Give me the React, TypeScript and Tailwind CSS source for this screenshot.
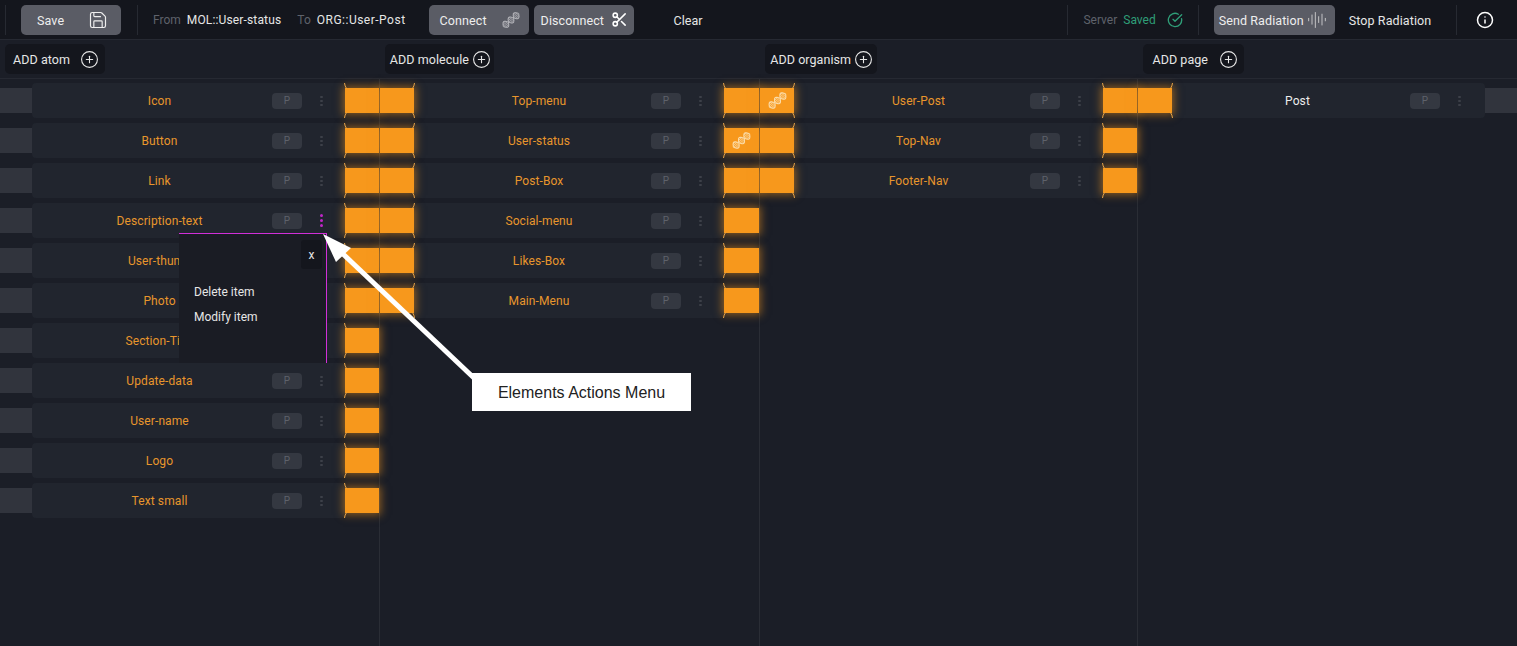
import { AudioLines, CircleCheckBig, CirclePlus, Info, Save, Scissors } from 'lucide-react';

interface Column {
  label: string;
  addClass: string;
  headClass: string;
  colClass: string;
  leftClass: string;
  cardClass: string;
  rightClass: string;
  items: string[];
  leftKind: 'gray' | 'orange';
  rightKind: 'gray' | 'orange';
}

const COLUMNS: Column[] = [
  {
    label: 'atom', addClass: 'w-[100px] gap-[10px] pr-[6px]', headClass: 'w-[380px]', colClass: 'w-[380px] border-r', leftClass: 'w-[32px]', cardClass: 'w-[313px] pl-[15px] pr-[22px]', rightClass: 'w-[34px]',
    leftKind: 'gray', rightKind: 'orange',
    items: ['Icon', 'Button', 'Link', 'Description-text', 'User-thumb', 'Photo', 'Section-Title', 'Update-data', 'User-name', 'Logo', 'Text small'],
  },
  {
    label: 'molecule', addClass: 'w-[109px] gap-[3px] pr-[3px]', headClass: 'w-[380px]', colClass: 'w-[380px] border-r', leftClass: 'w-[34px]', cardClass: 'w-[310px] pl-[13px] pr-[22px]', rightClass: 'w-[35px]',
    leftKind: 'orange', rightKind: 'orange',
    items: ['Top-menu', 'User-status', 'Post-Box', 'Social-menu', 'Likes-Box', 'Main-Menu'],
  },
  {
    label: 'organism', addClass: 'w-[112px] gap-[3px] pr-[4px]', headClass: 'w-[378px]', colClass: 'w-[378px] border-r', leftClass: 'w-[34px]', cardClass: 'w-[309px] pl-[13px] pr-[22px]', rightClass: 'w-[34px]',
    leftKind: 'orange', rightKind: 'orange',
    items: ['User-Post', 'Top-Nav', 'Footer-Nav'],
  },
  {
    label: 'page', addClass: 'w-[101px] gap-[11px] pr-[6px]', headClass: 'flex-1', colClass: 'flex-1', leftClass: 'w-[34px]', cardClass: 'w-[313px] pl-[13px] pr-[24px]', rightClass: 'flex-1',
    leftKind: 'orange', rightKind: 'gray',
    items: ['Post'],
  },
];

const wave = (sign: number) => {
  const points: string[] = [];
  for (let x = 0; x <= 24; x += 1) {
    points.push(`${x},${(12 + sign * 4.2 * Math.sin((Math.PI * x) / 8)).toFixed(2)}`);
  }
  return points.join(' ');
};

const RUNGS = [1.5, 3, 4.5, 6, 9.5, 11, 12.5, 14, 17.5, 19, 20.5, 22];

// diagonal double helix, hatched with small rungs
const Dna = ({ size, className }: { size: number; className: string }) => (
  <svg width={size} height={size} viewBox="0 0 24 24" fill="none" stroke="currentColor" className={className}>
    <g transform="rotate(-40 12 12)">
      <polyline points={wave(1)} strokeWidth="1.2" />
      <polyline points={wave(-1)} strokeWidth="1.2" />
      {RUNGS.map((x) => {
        const amp = Math.abs(Math.sin((Math.PI * x) / 8)) * 4.2;
        return <line key={x} x1={x} x2={x} y1={12 - amp} y2={12 + amp} strokeWidth="0.8" />;
      })}
    </g>
  </svg>
);

// small curved tips where a port meets its card
const Flare = ({ side }: { side: 'left' | 'right' }) => (
  <svg width="4" height="35" viewBox="0 0 4 35" fill="none" className={side === 'right' ? 'absolute left-[-1px] top-0' : 'absolute right-[-1px] top-0 -scale-x-100'}>
    <path d="M0.5 0 Q0.8 3 2.5 5.5 M0.5 35 Q0.8 32 2.5 29.5" stroke="#e9a548" strokeWidth="1" />
  </svg>
);

const Port = ({ kind, side, className, dna }: { kind: 'gray' | 'orange'; side: 'left' | 'right'; className: string; dna?: boolean }) => {
  if (kind === 'gray') {
    return (
      <div className={`${className} h-[35px] flex items-center`}>
        <div className="h-[25px] w-full bg-[#31343d]" />
      </div>
    );
  }
  return (
    <div className={`${className} relative h-[35px] flex items-center`}>
      <div className="h-[25px] w-full bg-[#f7981c] shadow-[0_0_8px_2px_rgba(247,152,28,0.5)] flex items-center justify-center">
        {dna && <Dna size={21} className="text-[#fbdca9]" />}
      </div>
      <Flare side={side} />
    </div>
  );
};

const Row = ({ col, name, rowIndex }: { col: Column; name: string; rowIndex: number }) => {
  const isPost = col.label === 'page';
  const active = col.label === 'atom' && rowIndex === 3;
  const leftDna = col.label === 'organism' && rowIndex === 0;
  const rightDna = col.label === 'molecule' && rowIndex === 1;
  return (
    <div className="flex h-[35px] mb-[5px]">
      <Port kind={col.leftKind} side="left" className={col.leftClass} dna={leftDna} />
      <div className={`${col.cardClass} h-[35px] flex items-center bg-[#21252e] rounded-[4px]`}>
        <span className={`flex-1 text-center text-[12px] tracking-[0.1px] ${isPost ? 'text-[#ececec]' : 'text-[#e8962c]'}`}>{name}</span>
        <span className="w-[30px] h-[16px] rounded-[4px] bg-[#343841] text-[#5e626b] text-[10px] flex items-center justify-center">P</span>
        <span className="ml-[18px] w-[3px] flex flex-col gap-[2px]">
          {[0, 1, 2].map((i) => (
            <span key={i} className={active ? 'w-[3px] h-[3px] rounded-full bg-[#c026c8]' : 'w-[3px] h-[2px] rounded-full bg-[#3d4049]'} />
          ))}
        </span>
      </div>
      <Port kind={col.rightKind} side="right" className={col.rightClass} dna={rightDna} />
    </div>
  );
};

const Separator = ({ className }: { className: string }) => <div className={`w-px h-[30px] bg-[#272a32] ${className}`} />;

const GrayButton = ({ className, children }: { className: string; children: React.ReactNode }) => (
  <button className={`h-[30px] rounded-[5px] bg-[#5a5c65] text-[#eeeeee] text-[12.5px] tracking-[0.1px] flex items-center ${className}`}>{children}</button>
);

const App = () => (
  <div className="relative w-[1517px] h-[646px] overflow-hidden bg-[#1b1e27] text-[12px] text-[#e6e6e6] font-['Roboto',sans-serif]">
    {/* top toolbar */}
    <div className="h-[40px] bg-[#14161d] border-b border-[#262932] flex items-center">
      <Separator className="ml-[5px]" />
      <GrayButton className="ml-[15px] w-[100px] pl-[16px] pr-[13px] justify-between">
        <span className="pt-[4px]">Save</span> <Save size={20} strokeWidth={1.4} />
      </GrayButton>
      <Separator className="ml-[16px]" />
      <span className="ml-[15px] text-[#5f626b]">From</span>
      <span className="ml-[6px] tracking-[0.15px]">MOL::User-status</span>
      <span className="ml-[16px] text-[#5f626b]">To</span>
      <span className="ml-[6px] tracking-[0.5px]">ORG::User-Post</span>
      <GrayButton className="ml-[23px] w-[100px] pl-[11px] pr-[8px] justify-between">
        <span className="pt-[4px]">Connect</span> <Dna size={20} className="text-[#b5b6bb]" />
      </GrayButton>
      <GrayButton className="ml-[5px] w-[100px] pl-[7px] pr-[6px] justify-between">
        <span className="pt-[4px]">Disconnect</span> <Scissors size={17} strokeWidth={2.2} className="text-white" />
      </GrayButton>
      <span className="ml-[40px] pt-[4px] text-[12.5px]">Clear</span>
      <Separator className="ml-[365px]" />
      <span className="ml-[15px] text-[#5f626b]">Server</span>
      <span className="ml-[6px] text-[#2f9e78]">Saved</span>
      <CircleCheckBig size={16} className="ml-[11px] text-[#2f9e78]" />
      <Separator className="ml-[15px]" />
      <GrayButton className="ml-[15px] w-[121px] pl-[5px] gap-[3px]">
        <span className="pt-[4px]">Send Radiation</span> <AudioLines size={20} strokeWidth={1} className="text-[#d8d8d8]" />
      </GrayButton>
      <span className="ml-[14px] pt-[4px] text-[12.5px] tracking-[0.1px]">Stop Radiation</span>
      <Separator className="ml-[25px]" />
      <Info size={18} className="ml-[19px] text-white" />
    </div>

    {/* add buttons */}
    <div className="h-[39px] border-b border-[#262932] flex items-center">
      {COLUMNS.map((col) => (
        <div key={col.label} className={`${col.headClass} pl-[5px]`}>
          <button className={`${col.addClass} h-[30px] rounded-[5px] bg-[#14161d] text-[12.5px] tracking-[0.05px] flex items-center justify-end`}>
            <span className="pt-[2px]">ADD {col.label}</span> <CirclePlus size={19} strokeWidth={1.4} />
          </button>
        </div>
      ))}
    </div>

    {/* columns */}
    <div className="flex h-[567px]">
      {COLUMNS.map((col) => (
        <div key={col.label} className={`${col.colClass} border-[#2a2d35] pt-[4px]`}>
          {col.items.map((name, i) => (
            <Row key={name} col={col} name={name} rowIndex={i} />
          ))}
        </div>
      ))}
    </div>

    {/* actions menu */}
    <div className="absolute left-[179px] top-[233px] w-[148px] h-[130px] bg-[#1a1c24] border-t border-r border-[#d12fd8]">
      <button className="absolute right-[4px] top-[6px] w-[21px] h-[29px] bg-[#14161d] rounded-[3px] text-[12px]">x</button>
      <div className="pl-[15px] pt-[51px] flex flex-col gap-[11px]">
        <span className="leading-[14px]">Delete item</span>
        <span className="leading-[14px]">Modify item</span>
      </div>
    </div>

    {/* annotation */}
    <svg className="absolute left-0 top-0 pointer-events-none" width="1517" height="646" fill="none">
      <path d="M343 254 L474 378" stroke="#ffffff" strokeWidth="5" />
      <path d="M323 234 L351 248 L336 262 Z" fill="#ffffff" />
    </svg>
    <div className="absolute left-[472px] top-[373px] w-[219px] h-[38px] pt-[1px] bg-white text-[#222222] text-[16px] font-['Liberation_Sans',sans-serif] flex items-center justify-center">
      Elements Actions Menu
    </div>
  </div>
);

export default App;
